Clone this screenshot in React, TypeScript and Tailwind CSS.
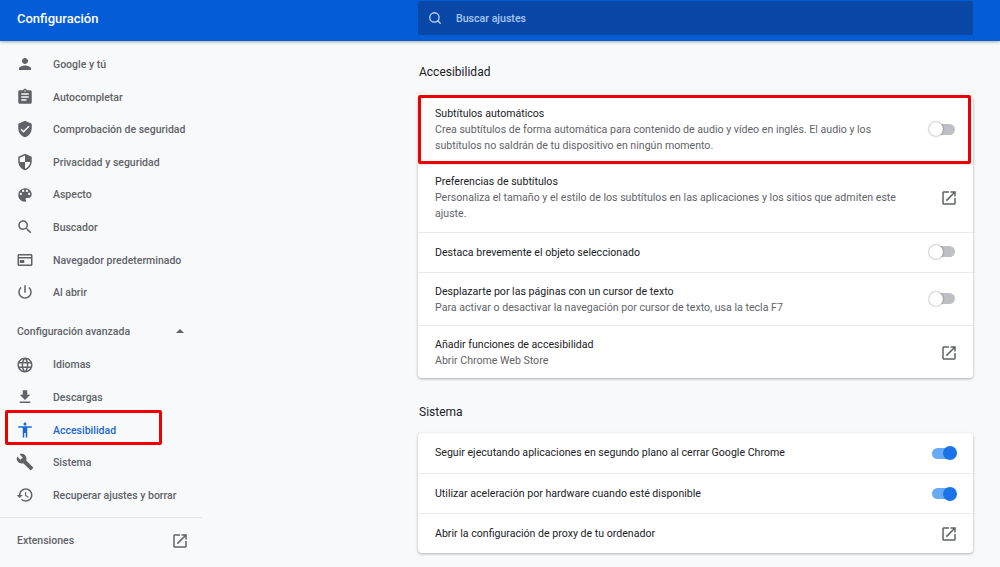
import { Search } from "lucide-react";
import type { ReactNode } from "react";

function MaterialIcon({ d, className = "" }: { d: string; className?: string }) {
  return (
    <svg viewBox="0 0 24 24" className={`h-[18px] w-[18px] fill-current ${className}`}>
      <path d={d} />
    </svg>
  );
}

const icons = {
  person: "M12 12c2.21 0 4-1.79 4-4s-1.79-4-4-4-4 1.79-4 4 1.79 4 4 4zm0 2c-2.67 0-8 1.34-8 4v2h16v-2c0-2.66-5.33-4-8-4z",
  clipboard: "M19 3h-4.18C14.4 1.84 13.3 1 12 1c-1.3 0-2.4.84-2.82 2H5c-1.1 0-2 .9-2 2v14c0 1.1.9 2 2 2h14c1.1 0 2-.9 2-2V5c0-1.1-.9-2-2-2zm-7 0c.55 0 1 .45 1 1s-.45 1-1 1-1-.45-1-1 .45-1 1-1zm2 14H7v-2h7v2zm3-4H7v-2h10v2zm0-4H7V7h10v2z",
  shieldCheck: "M12 1L3 5v6c0 5.55 3.84 10.74 9 12 5.16-1.26 9-6.45 9-12V5l-9-4zm-2 16l-4-4 1.41-1.41L10 14.17l6.59-6.59L18 9l-8 8z",
  shield: "M12 1L3 5v6c0 5.55 3.84 10.74 9 12 5.16-1.26 9-6.45 9-12V5l-9-4zm0 10.99h7c-.53 4.12-3.28 7.79-7 8.94V12H5V6.3l7-3.11v8.8z",
  palette: "M12 3c-4.97 0-9 4.03-9 9s4.03 9 9 9c.83 0 1.5-.67 1.5-1.5 0-.39-.15-.74-.39-1.01-.23-.26-.38-.61-.38-.99 0-.83.67-1.5 1.5-1.5H16c2.76 0 5-2.24 5-5 0-4.42-4.03-8-9-8zm-5.5 9c-.83 0-1.5-.67-1.5-1.5S5.67 9 6.5 9 8 9.67 8 10.5 7.33 12 6.5 12zm3-4C8.67 8 8 7.33 8 6.5S8.67 5 9.5 5s1.5.67 1.5 1.5S10.33 8 9.5 8zm5 0c-.83 0-1.5-.67-1.5-1.5S13.67 5 14.5 5s1.5.67 1.5 1.5S15.33 8 14.5 8zm3 4c-.83 0-1.5-.67-1.5-1.5S16.67 9 17.5 9s1.5.67 1.5 1.5-.67 1.5-1.5 1.5z",
  search: "M15.5 14h-.79l-.28-.27C15.41 12.59 16 11.11 16 9.5 16 5.91 13.09 3 9.5 3S3 5.91 3 9.5 5.91 16 9.5 16c1.61 0 3.09-.59 4.23-1.57l.27.28v.79l5 4.99L20.49 19l-4.99-5zm-6 0C7.01 14 5 11.99 5 9.5S7.01 5 9.5 5 14 7.01 14 9.5 11.99 14 9.5 14z",
  browser: "M20 4H4c-1.1 0-2 .9-2 2v12c0 1.1.9 2 2 2h16c1.1 0 2-.9 2-2V6c0-1.1-.9-2-2-2zm0 14H4v-8h16v8zm0-10H4V6h16v2zm-9 4H5v4h6v-4z",
  power: "M13 3h-2v10h2V3zm4.83 2.17l-1.42 1.42C17.99 7.86 19 9.81 19 12c0 3.87-3.13 7-7 7s-7-3.13-7-7c0-2.19 1.01-4.14 2.58-5.42L6.17 5.17C4.23 6.82 3 9.26 3 12c0 4.97 4.03 9 9 9s9-4.03 9-9c0-2.74-1.23-5.18-3.17-6.83z",
  globe: "M11.99 2C6.47 2 2 6.48 2 12s4.47 10 9.99 10C17.52 22 22 17.52 22 12S17.52 2 11.99 2zm6.93 6h-2.95c-.32-1.25-.78-2.45-1.38-3.56 1.84.63 3.37 1.91 4.33 3.56zM12 4.04c.83 1.2 1.48 2.53 1.91 3.96h-3.82c.43-1.43 1.08-2.76 1.91-3.96zM4.26 14C4.1 13.36 4 12.69 4 12s.1-1.36.26-2h3.38c-.08.66-.14 1.32-.14 2 0 .68.06 1.34.14 2H4.26zm.82 2h2.95c.32 1.25.78 2.45 1.38 3.56-1.84-.63-3.37-1.9-4.33-3.56zm2.95-8H5.08c.96-1.66 2.49-2.93 4.33-3.56C8.81 5.55 8.35 6.75 8.03 8zM12 19.96c-.83-1.2-1.48-2.53-1.91-3.96h3.82c-.43 1.43-1.08 2.76-1.91 3.96zM14.34 14H9.66c-.09-.66-.16-1.32-.16-2 0-.68.07-1.35.16-2h4.68c.09.65.16 1.32.16 2 0 .68-.07 1.34-.16 2zm.25 5.56c.6-1.11 1.06-2.31 1.38-3.56h2.95c-.96 1.65-2.49 2.93-4.33 3.56zM16.36 14c.08-.66.14-1.32.14-2 0-.68-.06-1.34-.14-2h3.38c.16.64.26 1.31.26 2s-.1 1.36-.26 2h-3.38z",
  download: "M19 9h-4V3H9v6H5l7 7 7-7zM5 18v2h14v-2H5z",
  accessibility: "M12 2c1.1 0 2 .9 2 2s-.9 2-2 2-2-.9-2-2 .9-2 2-2zm9 7h-6v13h-2v-6h-2v6H9V9H3V7h18v2z",
  wrench: "M22.7 19l-9.1-9.1c.9-2.3.4-5-1.5-6.9-2-2-5-2.4-7.4-1.3L9 6 6 9 1.6 4.7C.4 7.1.9 10.1 2.9 12.1c1.9 1.9 4.6 2.4 6.9 1.5l9.1 9.1c.4.4 1 .4 1.4 0l2.3-2.3c.5-.4.5-1.1.1-1.4z",
  restore: "M13 3c-4.97 0-9 4.03-9 9H1l3.89 3.89.07.14L9 12H6c0-3.87 3.13-7 7-7s7 3.13 7 7-3.13 7-7 7c-1.93 0-3.68-.79-4.94-2.06l-1.42 1.42C8.27 19.99 10.51 21 13 21c4.97 0 9-4.03 9-9s-4.03-9-9-9zm-1 5v5l4.28 2.54.72-1.21-3.5-2.08V8H12z",
  external: "M19 19H5V5h7V3H5c-1.11 0-2 .9-2 2v14c0 1.1.89 2 2 2h14c1.1 0 2-.9 2-2v-7h-2v7zM14 3v2h3.59l-9.83 9.83 1.41 1.41L19 6.41V10h2V3h-7z",
};

function NavItem({ icon, label, active = false }: { icon: string; label: string; active?: boolean }) {
  const color = active ? "text-[#1a67d2]" : "text-[#5f6368]";
  return (
    <div className={`flex h-[32.6px] items-center pl-[16px] ${color}`}>
      <MaterialIcon d={icon} className="shrink-0" />
      <span className="ml-[19px] pt-[1.4px] text-[10.5px] font-medium whitespace-nowrap">{label}</span>
    </div>
  );
}

function Toggle({ on = false }: { on?: boolean }) {
  if (on) {
    return (
      <div className="relative mr-[1px] h-[11px] w-[23px] rounded-full bg-[#6aa9f4]">
        <div className="absolute -right-[2px] -top-[1.5px] h-[14px] w-[14px] rounded-full bg-[#1a73e8]" />
      </div>
    );
  }
  return (
    <div className="relative mr-[1px] mb-[2px] h-[11px] w-[23px] rounded-full bg-[#bdc1c6]">
      <div className="absolute -left-[3px] -top-[1.5px] h-[14px] w-[14px] rounded-full bg-white shadow-[0_0_2px_rgba(0,0,0,0.55)]" />
    </div>
  );
}

function Row({
  title,
  sub,
  right,
  className,
}: {
  title: string;
  sub?: ReactNode;
  right: ReactNode;
  className: string;
}) {
  return (
    <div className={`flex items-center justify-between border-t border-[#e8eaed] pl-[17px] pr-[17px] first:border-t-0 ${className}`}>
      <div className="min-w-0 text-[10.6px] leading-[16px]">
        <div className="text-[#202124]">{title}</div>
        {sub && <div className="text-[#5f6368]">{sub}</div>}
      </div>
      <div className="flex w-[26px] shrink-0 justify-end">{right}</div>
    </div>
  );
}

const ext = <MaterialIcon d={icons.external} className="-mr-[1.5px] text-[#5f6368]" />;

export default function App() {
  return (
    <div className="flex h-[567px] w-[1000px] flex-col overflow-hidden bg-[#f8f9fa] font-['Roboto',sans-serif]">
      <header className="z-10 flex h-[41px] shrink-0 items-center bg-[#045cd6] shadow-[0_1px_3px_rgba(60,64,67,0.45)]">
        <h1 className="w-[418px] pb-[4px] pl-[17px] text-[13px] font-medium text-white">Configuración</h1>
        <div className="flex h-[34px] w-[555px] -translate-y-[3px] items-center rounded-[2px] bg-[#0a48a8] pl-[10px]">
          <Search className="h-[14px] w-[14px] text-[#c3d9f8]" strokeWidth={2.2} />
          <span className="ml-[14px] pt-[3px] text-[10.6px] font-medium text-[#a9c7f3]">Buscar ajustes</span>
        </div>
      </header>

      <div className="flex flex-1">
        <aside className="w-[202px] shrink-0 pt-[7px]">
          <NavItem icon={icons.person} label="Google y tú" />
          <NavItem icon={icons.clipboard} label="Autocompletar" />
          <NavItem icon={icons.shieldCheck} label="Comprobación de seguridad" />
          <NavItem icon={icons.shield} label="Privacidad y seguridad" />
          <NavItem icon={icons.palette} label="Aspecto" />
          <NavItem icon={icons.search} label="Buscador" />
          <NavItem icon={icons.browser} label="Navegador predeterminado" />
          <NavItem icon={icons.power} label="Al abrir" />
          <div className="mt-[6px] flex h-[33px] items-center justify-between pl-[17px] pr-[16px] text-[10.5px] font-medium text-[#5f6368]">
            <span className="pt-[2px]">Configuración avanzada</span>
            <span className="mr-[2px] h-0 w-0 border-x-[4px] border-b-[4px] border-x-transparent border-b-[#5f6368]" />
          </div>
          <div className="mt-[0.5px]">
            <NavItem icon={icons.globe} label="Idiomas" />
            <NavItem icon={icons.download} label="Descargas" />
            <div className="relative">
              <NavItem icon={icons.accessibility} label="Accesibilidad" active />
              <div className="pointer-events-none absolute left-[5px] top-[-3px] h-[34.5px] w-[157px] rounded-[2px] border-[3px] border-[#ec0000]" />
            </div>
            <NavItem icon={icons.wrench} label="Sistema" />
            <NavItem icon={icons.restore} label="Recuperar ajustes y borrar" />
          </div>
          <div className="mt-[6px] border-t border-[#e3e5e8]" />
          <div className="flex h-[46px] items-center justify-between pl-[17px] pr-[14.5px] text-[10.5px] font-medium text-[#5f6368]">
            <span>Extensiones</span>
            {ext}
          </div>
        </aside>

        <main className="ml-[216px] w-[555px]">
          <h2 className="mt-[22px] h-[33px] pl-[1px] text-[12px] leading-[18px] text-[#202124]">Accesibilidad</h2>
          <section className="rounded-[4px] bg-white shadow-[0_1px_3px_rgba(60,64,67,0.4)]">
            <div className="relative">
              <Row
                title="Subtítulos automáticos"
                sub={
                  <>
                    Crea subtítulos de forma automática para contenido de audio y vídeo en inglés. El audio y los
                    <br />
                    subtítulos no saldrán de tu dispositivo en ningún momento.
                  </>
                }
                right={<Toggle />}
                className="h-[68px]"
              />
              <div className="pointer-events-none absolute -top-[1px] left-0 h-[69px] w-[553px] rounded-[2px] border-[3px] border-[#ec0000]" />
            </div>
            <Row
              title="Preferencias de subtítulos"
              sub={
                <>
                  Personaliza el tamaño y el estilo de los subtítulos en las aplicaciones y los sitios que admiten este
                  <br />
                  ajuste.
                </>
              }
              right={ext}
              className="h-[68px] pb-[1px]"
            />
            <Row title="Destaca brevemente el objeto seleccionado" right={<Toggle />} className="h-[40px]" />
            <Row
              title="Desplazarte por las páginas con un cursor de texto"
              sub="Para activar o desactivar la navegación por cursor de texto, usa la tecla F7"
              right={<Toggle />}
              className="h-[53px] pt-[1px]"
            />
            <Row title="Añadir funciones de accesibilidad" sub="Abrir Chrome Web Store" right={ext} className="h-[53px] pt-[1px]" />
          </section>

          <h2 className="mt-[25px] h-[30px] pl-[1px] text-[12px] leading-[18px] text-[#202124]">Sistema</h2>
          <section className="rounded-[4px] bg-white shadow-[0_1px_3px_rgba(60,64,67,0.4)]">
            <Row title="Seguir ejecutando aplicaciones en segundo plano al cerrar Google Chrome" right={<Toggle on />} className="h-[40px]" />
            <Row title="Utilizar aceleración por hardware cuando esté disponible" right={<Toggle on />} className="h-[40px]" />
            <Row title="Abrir la configuración de proxy de tu ordenador" right={ext} className="h-[40px]" />
          </section>
        </main>
      </div>
    </div>
  );
}
